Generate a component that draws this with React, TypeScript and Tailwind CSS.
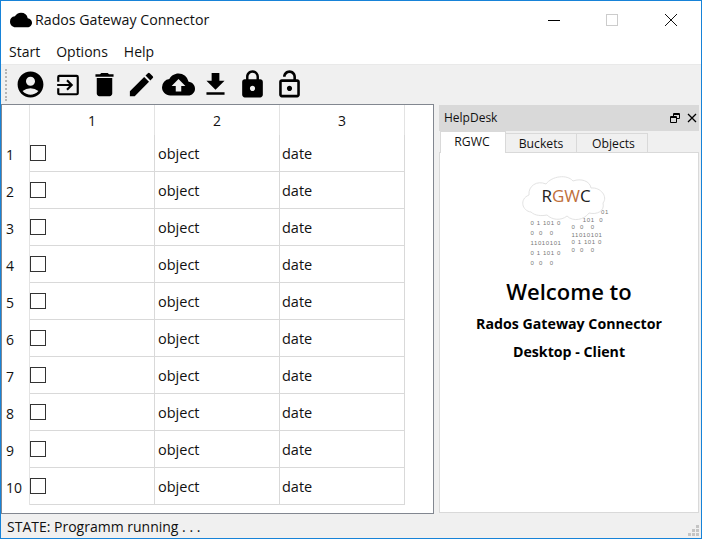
import React from 'react';
import {
  MdAccountCircle,
  MdCloud,
  MdCloudUpload,
  MdDelete,
  MdEdit,
  MdFileDownload,
  MdLock,
  MdOutlineLockOpen,
} from 'react-icons/md';

const LoginIcon: React.FC = () => (
  <svg viewBox="0 0 24 24" className="w-[26px] h-[26px]" fill="currentColor">
    <path d="M4 2.5h16a2 2 0 0 1 2 2v15a2 2 0 0 1-2 2H4a2 2 0 0 1-2-2V15h2v4.5h16v-15H4V9H2V4.5a2 2 0 0 1 2-2zm6.4 13.2L13 13H2v-2h11l-2.6-2.7L11.8 7l5 5-5 5z" />
  </svg>
);

const rows = [1, 2, 3, 4, 5, 6, 7, 8, 9, 10];

const Logo: React.FC = () => (
  <div className="relative w-[100px] h-[93px] font-['Liberation_Sans',sans-serif] text-[6px] tracking-[0.6px] text-[#777]">
    <div className="absolute left-[11px] top-[44px] whitespace-pre leading-[10px]">
      {'0 1 101 0\n0  0   0\n11010101\n0 1 101 0\n0  0   0'}
    </div>
    <div className="absolute left-[52px] top-[35px] whitespace-pre leading-[7.6px]">
      {'             01\n     101  0\n0  0   0\n11010101\n0 1 101 0\n0  0   0'}
    </div>
    <svg viewBox="0 0 92 54" className="absolute left-0 top-0 w-[92px] h-[54px]">
      <path
        d="M11 38c-9-1-12-13-2-17-1-9 8-15 17-11 6-8 21-10 27-3 8-3 17 0 18 7 10-1 17 9 12 15 2 8-6 12-14 10-5 7-16 9-22 3-6 5-15 4-20-1-5 1-12 1-16-3z"
        fill="#fff"
        stroke="#e3e3e3"
        strokeWidth="1"
      />
    </svg>
    <div className="absolute left-[22px] top-[12px] font-['Open_Sans',sans-serif] text-[17px] leading-[20px] tracking-normal text-[#222]">
      R<span className="text-[#c0703a]">GW</span>C
    </div>
  </div>
);

const App: React.FC = () => {
  return (
    <div className="w-[702px] h-[539px] flex flex-col border border-[#1783d8] bg-[#f0f0f0] overflow-hidden font-['Open_Sans',sans-serif] text-[14px] text-[#111]">
      {/* Title bar */}
      <div className="h-[38px] flex items-center bg-white shrink-0">
        <MdCloud className="w-[22px] h-[22px] ml-[9px] mr-[3px] text-black" />
        <span className="text-[14.2px]">Rados Gateway Connector</span>
        <div className="ml-auto flex items-center">
          <div className="w-[12px] h-px bg-black mr-[46px]" />
          <div className="w-[12px] h-[12px] border border-[#ccc] mr-[47px]" />
          <svg viewBox="0 0 12 12" className="w-[12px] h-[12px] mr-[24px]" stroke="#111" strokeWidth="1">
            <path d="M0 0l12 12M12 0L0 12" />
          </svg>
        </div>
      </div>

      {/* Menu */}
      <div className="h-[26px] flex items-center gap-[16px] pl-[8px] bg-white shrink-0 border-b border-[#e9e9e9]">
        <span>Start</span>
        <span>Options</span>
        <span>Help</span>
      </div>

      {/* Toolbar */}
      <div className="h-[39px] flex items-center shrink-0 relative text-black">
        <div className="h-[32px] w-[3px] ml-[4px] mr-[4px] border-l-2 border-dotted border-[#b5b5b5]" />
        {[
          <MdAccountCircle className="w-[31px] h-[31px]" key="account" />,
          <LoginIcon key="login" />,
          <MdDelete className="w-[31px] h-[31px]" key="delete" />,
          <MdEdit className="w-[31px] h-[31px]" key="edit" />,
          <MdCloudUpload className="w-[33px] h-[33px]" key="upload" />,
          <MdFileDownload className="w-[31px] h-[31px]" key="download" />,
          <MdLock className="w-[31px] h-[31px]" key="lock" />,
          <MdOutlineLockOpen className="w-[31px] h-[31px]" key="unlock" />,
        ].map((icon, i) => (
          <div key={i} className="w-[37px] flex justify-center">
            {icon}
          </div>
        ))}
      </div>

      {/* Main area */}
      <div className="flex-1 flex min-h-0">
        {/* Table */}
        <div className="w-[433px] bg-white border border-[#828790] flex flex-col shrink-0">
          <div className="flex h-[30px] shrink-0">
            <div className="w-[28px] border-r border-[#e3e3e3] shrink-0" />
            {[1, 2, 3].map(n => (
              <div key={n} className="w-[125px] flex items-center justify-center border-r border-[#e3e3e3]">
                {n}
              </div>
            ))}
          </div>
          {rows.map(n => (
            <div key={n} className="flex h-[37px] shrink-0">
              <div className="w-[28px] flex items-center pl-[4px] pt-[2px] border-r border-[#e3e3e3] shrink-0">{n}</div>
              <div className="w-[125px] border-r border-b border-[#d9d9d9] pt-[10px]">
                <div className="w-[16px] h-[16px] border border-[#333]" />
              </div>
              <div className="w-[125px] border-r border-b border-[#d9d9d9] flex items-center pl-[3px] pt-[2px] text-[14.5px]">object</div>
              <div className="w-[125px] border-r border-b border-[#d9d9d9] flex items-center pl-[2px] pt-[2px] text-[14.5px]">date</div>
            </div>
          ))}
        </div>

        {/* HelpDesk dock */}
        <div className="flex-1 flex flex-col ml-[5px] mr-[2px] mt-px mb-px min-w-0">
          <div className="h-[26px] bg-[#d9d9d9] flex items-center pl-[5px] pr-[2px] text-[12px] shrink-0">
            <span>HelpDesk</span>
            <svg viewBox="0 0 10 10" className="ml-auto w-[10px] h-[10px]" fill="none" stroke="#000" strokeWidth="1">
              <path d="M3.5 3V.5h6v5H7M.5 3.5h6v6h-6zM.5 4.5h6M3.5 1.5h6" />
            </svg>
            <svg viewBox="0 0 10 10" className="ml-[7px] w-[10px] h-[10px]" stroke="#000" strokeWidth="1.3">
              <path d="M1 1l8 8M9 1L1 9" />
            </svg>
          </div>
          <div className="h-[22px] flex items-end pl-px text-[12.2px] shrink-0 relative z-10 -mb-px">
            <div className="w-[66px] h-[22px] bg-white border border-b-0 border-[#d9d9d9] flex items-center justify-center pr-[2px]">RGWC</div>
            <div className="w-[71px] h-[20px] bg-[#f0f0f0] border border-l-0 border-[#d9d9d9] flex items-center justify-center pt-[2px]">Buckets</div>
            <div className="w-[71px] h-[20px] bg-[#f0f0f0] border border-l-0 border-[#d9d9d9] flex items-center justify-center pt-[2px] pl-[3px]">Objects</div>
          </div>
          <div className="flex-1 bg-white border border-[#d9d9d9] flex flex-col items-center pt-[21px] text-black">
            <div className="pl-[1px]">
              <Logo />
            </div>
            <div className="text-[22px] font-semibold leading-[30px] mt-[9px]">Welcome to</div>
            <div className="text-[14.2px] font-bold leading-[20px] mt-[8px]">Rados Gateway Connector</div>
            <div className="text-[14.2px] font-bold leading-[20px] mt-[8px]">Desktop - Client</div>
          </div>
        </div>
      </div>

      {/* Status bar */}
      <div className="h-[24px] flex items-center pl-[6px] shrink-0 relative">
        <span>STATE: Programm running . . .</span>
        <svg viewBox="0 0 11 11" className="absolute right-[2px] bottom-[2px] w-[11px] h-[11px]" fill="#c4c4c4">
          <path d="M8 0h3v3H8zM4 4h3v3H4zM8 4h3v3H8zM0 8h3v3H0zM4 8h3v3H4zM8 8h3v3H8z" />
        </svg>
      </div>
    </div>
  );
};

export default App;
